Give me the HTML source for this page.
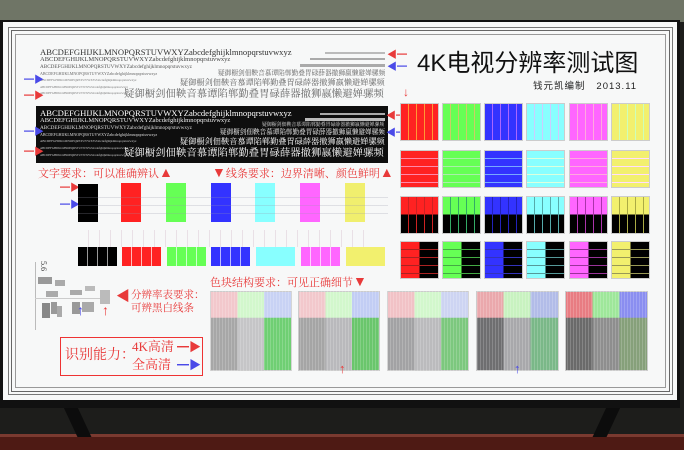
<!DOCTYPE html>
<html><head><meta charset="utf-8"><style>
*{margin:0;padding:0;box-sizing:border-box}
body{width:684px;height:450px;overflow:hidden;background:#1d1d1b;position:relative;font-family:"Liberation Serif","Noto Serif CJK SC",serif}
.a{position:absolute}
.t{position:absolute;white-space:nowrap;line-height:1}
.r{color:#e83a3a}
.blk{position:absolute;width:39px;height:38px;border:1px solid #ccc}
.c{letter-spacing:0}
</style></head><body>
<div class="a" style="left:0;top:0;width:684px;height:22px;background:#6f7566"></div>
<div class="a" style="left:0;top:436px;width:684px;height:14px;background:#4e1a14"></div>
<div class="a" style="left:0;top:434px;width:684px;height:3px;background:#7a3a30"></div>
<div class="a" style="left:70px;top:405px;width:14px;height:32px;background:#0c0c0c;transform:skewX(25deg)"></div>
<div class="a" style="left:600px;top:405px;width:14px;height:32px;background:#0c0c0c;transform:skewX(-25deg)"></div>
<div class="a" style="left:0;top:20px;width:680px;height:388px;background:#111"></div>
<div class="a" style="left:3px;top:22px;width:674px;height:378px;background:#f7f8f8"></div>
<div class="a" style="left:8px;top:27px;width:665px;height:368px;border:1px solid #777"></div>
<div class="a" style="left:11px;top:30px;width:659px;height:362px;border:1px solid #666"></div>
<div class="a" style="left:15px;top:34px;width:651px;height:354px;border:1px solid #999"></div>

<div class="t" style="left:40px;top:48px;font-size:8.6px;color:#333">ABCDEFGHIJKLMNOPQRSTUVWXYZabcdefghijklmnopqrstuvwxyz</div>
<div class="t" style="left:40px;top:57px;font-size:6.5px;color:#444">ABCDEFGHIJKLMNOPQRSTUVWXYZabcdefghijklmnopqrstuvwxyz</div>
<div class="t" style="left:40px;top:65px;font-size:5.2px;color:#555">ABCDEFGHIJKLMNOPQRSTUVWXYZabcdefghijklmnopqrstuvwxyz</div>
<div class="t" style="left:40px;top:72px;font-size:4px;color:#666">ABCDEFGHIJKLMNOPQRSTUVWXYZabcdefghijklmnopqrstuvwxyz</div>
<div class="t" style="left:40px;top:79px;font-size:3.3px;color:#777">ABCDEFGHIJKLMNOPQRSTUVWXYZabcdefghijklmnopqrstuvwxyz</div>
<div class="t" style="left:40px;top:86px;font-size:3px;color:#777">ABCDEFGHIJKLMNOPQRSTUVWXYZabcdefghijklmnopqrstuvwxyz</div>
<div class="t" style="left:40px;top:92px;font-size:3px;color:#777">ABCDEFGHIJKLMNOPQRSTUVWXYZabcdefghijklmnopqrstuvwxyz</div>
<div class="a" style="left:325px;top:52px;width:60px;height:2px;background:#bbb"></div>
<div class="a" style="left:310px;top:58px;width:75px;height:2px;background:#aaa"></div>
<div class="a" style="left:300px;top:64px;width:85px;height:3px;background:#aaa"></div>
<div class="t c" style="left:218px;top:71px;font-size:6.7px;color:#666">疑御橱剑佃鞅音慕谭陷郸勤叠胃碌薛器撤狮嬴懒避婵骡频</div>
<div class="t c" style="left:180px;top:79px;font-size:8.2px;color:#666">疑御橱剑佃鞅音慕谭陷郸勤叠胃碌薛器撤狮嬴懒避婵骡频</div>
<div class="t c" style="left:124px;top:90px;font-size:10.4px;color:#666">疑御橱剑佃鞅音慕谭陷郸勤叠胃碌薛器撤狮嬴懒避婵骡频</div>

<div class="a" style="left:36px;top:106px;width:352px;height:57px;background:#0e0e0e"></div>
<div class="t" style="left:40px;top:109px;font-size:8.6px;color:#fff">ABCDEFGHIJKLMNOPQRSTUVWXYZabcdefghijklmnopqrstuvwxyz</div>
<div class="t" style="left:40px;top:118px;font-size:6.5px;color:#eee">ABCDEFGHIJKLMNOPQRSTUVWXYZabcdefghijklmnopqrstuvwxyz</div>
<div class="t" style="left:40px;top:126px;font-size:5.2px;color:#ddd">ABCDEFGHIJKLMNOPQRSTUVWXYZabcdefghijklmnopqrstuvwxyz</div>
<div class="t" style="left:40px;top:133px;font-size:4px;color:#ddd">ABCDEFGHIJKLMNOPQRSTUVWXYZabcdefghijklmnopqrstuvwxyz</div>
<div class="t" style="left:40px;top:140px;font-size:3.3px;color:#ccc">ABCDEFGHIJKLMNOPQRSTUVWXYZabcdefghijklmnopqrstuvwxyz</div>
<div class="t" style="left:40px;top:147px;font-size:3px;color:#ccc">ABCDEFGHIJKLMNOPQRSTUVWXYZabcdefghijklmnopqrstuvwxyz</div>
<div class="t" style="left:40px;top:154px;font-size:3px;color:#ccc">ABCDEFGHIJKLMNOPQRSTUVWXYZabcdefghijklmnopqrstuvwxyz</div>
<div class="a" style="left:320px;top:113px;width:65px;height:2px;background:#aaa"></div>
<div class="a" style="left:305px;top:118px;width:80px;height:3px;background:#bbb"></div>
<div class="t c" style="left:262px;top:124px;font-size:4.9px;color:#ddd">疑御橱剑佃鞅音慕谭陷郸勤叠胃碌薛器撤狮嬴懒避婵骡频</div>
<div class="t c" style="left:220px;top:130px;font-size:6.6px;color:#eee">疑御橱剑佃鞅音慕谭陷郸勤叠胃碌薛器撤狮嬴懒避婵骡频</div>
<div class="t c" style="left:180px;top:138px;font-size:8.2px;color:#fff">疑御橱剑佃鞅音慕谭陷郸勤叠胃碌薛器撤狮嬴懒避婵骡频</div>
<div class="t c" style="left:124px;top:149px;font-size:10.4px;color:#fff">疑御橱剑佃鞅音慕谭陷郸勤叠胃碌薛器撤狮嬴懒避婵骡频</div>

<div class="t r" style="left:387px;top:51px;font-size:10px">◀━</div>
<div class="t" style="left:387px;top:63px;font-size:10px;color:#4a4ae8">◀━</div>
<div class="t" style="left:24px;top:76px;font-size:10px;color:#4a4ae8">━▶</div>
<div class="t r" style="left:24px;top:92px;font-size:10px">━▶</div>
<div class="t" style="left:24px;top:128px;font-size:10px;color:#4a4ae8">━▶</div>
<div class="t r" style="left:24px;top:148px;font-size:10px">━▶</div>
<div class="t r" style="left:386px;top:112px;font-size:10px">◀━</div>
<div class="t" style="left:386px;top:129px;font-size:10px;color:#4a4ae8">◀━</div>
<div class="t r" style="left:60px;top:184px;font-size:10px">━▶</div>
<div class="t" style="left:60px;top:201px;font-size:10px;color:#4a4ae8">━▶</div>

<div class="t r" style="left:38px;top:167px;font-size:11px">文字要求：可以准确辨认<span style="font-size:14px">▲</span></div>
<div class="t r" style="left:212px;top:167px;font-size:11px"><span style="font-size:14px">▼</span>线条要求：边界清晰、颜色鲜明<span style="font-size:14px">▲</span></div>

<div class="a" style="left:78px;top:184px;width:20px;height:38px;background:#000"></div>
<div class="a" style="left:121px;top:183px;width:20px;height:39px;background:#f22"></div>
<div class="a" style="left:166px;top:183px;width:20px;height:39px;background:#6f5"></div>
<div class="a" style="left:211px;top:183px;width:20px;height:39px;background:#33f"></div>
<div class="a" style="left:255px;top:183px;width:20px;height:39px;background:#8ff"></div>
<div class="a" style="left:300px;top:183px;width:20px;height:39px;background:#f6f"></div>
<div class="a" style="left:345px;top:183px;width:20px;height:39px;background:#f0ef6e"></div>
<div class="a" style="left:78px;top:190px;width:310px;height:26px;background:repeating-linear-gradient(180deg,transparent 0 7px,rgba(150,150,170,.25) 7px 8px)"></div>

<div class="a" style="left:78px;top:230px;width:290px;height:17px;background:repeating-linear-gradient(90deg,transparent 0 10px,rgba(200,170,190,.3) 10px 11px)"></div>
<div class="a" style="left:78px;top:247px;width:39px;height:19px;background:repeating-linear-gradient(90deg,#000 0 9px,#999 9px 10px)"></div>
<div class="a" style="left:122px;top:247px;width:39px;height:19px;background:repeating-linear-gradient(90deg,#f22 0 9px,#fbb 9px 10px)"></div>
<div class="a" style="left:167px;top:247px;width:39px;height:19px;background:repeating-linear-gradient(90deg,#6f5 0 9px,#cfc 9px 10px)"></div>
<div class="a" style="left:211px;top:247px;width:39px;height:19px;background:repeating-linear-gradient(90deg,#33f 0 9px,#bbf 9px 10px)"></div>
<div class="a" style="left:256px;top:247px;width:39px;height:19px;background:#8ff"></div>
<div class="a" style="left:301px;top:247px;width:39px;height:19px;background:repeating-linear-gradient(90deg,#f6f 0 9px,#fcf 9px 10px)"></div>
<div class="a" style="left:346px;top:247px;width:39px;height:19px;background:#f2f06e"></div>

<div class="a" style="left:35px;top:262px;width:1px;height:68px;background:#bbb"></div>
<div class="a" style="left:35px;top:298px;width:75px;height:1px;background:#ccc"></div>
<div class="t" style="left:38px;top:262px;font-size:8px;color:#333;transform:rotate(90deg)">5.6</div>
<div class="a" style="left:38px;top:277px;width:14px;height:7px;background:#999"></div>
<div class="a" style="left:55px;top:280px;width:10px;height:6px;background:#aaa"></div>
<div class="a" style="left:46px;top:291px;width:12px;height:6px;background:#aaa"></div>
<div class="a" style="left:42px;top:303px;width:8px;height:15px;background:#888"></div>
<div class="a" style="left:51px;top:302px;width:6px;height:12px;background:#999"></div>
<div class="a" style="left:57px;top:306px;width:5px;height:11px;background:#aaa"></div>
<div class="a" style="left:70px;top:290px;width:12px;height:5px;background:#aaa"></div>
<div class="a" style="left:85px;top:286px;width:10px;height:5px;background:#bbb"></div>
<div class="a" style="left:72px;top:302px;width:8px;height:12px;background:#999"></div>
<div class="a" style="left:82px;top:302px;width:12px;height:10px;background:#aaa"></div>
<div class="a" style="left:100px;top:290px;width:10px;height:14px;background:#bbb"></div>
<div class="t" style="left:77px;top:305px;font-size:14px;color:#4a4ae8">↑</div>
<div class="t r" style="left:102px;top:305px;font-size:14px">↑</div>
<div class="t r" style="left:116px;top:291px;font-size:14px">◀</div>
<div class="t r" style="left:131px;top:291px;font-size:10.5px">分辨率表要求：</div>
<div class="t r" style="left:131px;top:304px;font-size:10.5px">可辨黑白线条</div>

<div class="a" style="left:60px;top:337px;width:143px;height:39px;border:1.5px solid #e33"></div>
<div class="t r" style="left:65px;top:349px;font-size:14px">识别能力：</div>
<div class="t r" style="left:132px;top:340px;font-size:13px">4K高清</div>
<div class="t" style="left:132px;top:358px;font-size:13px;color:#e33">全高清</div>
<div class="t r" style="left:177px;top:341px;font-size:12px">━▶</div>
<div class="t" style="left:177px;top:359px;font-size:12px;color:#4a4ae8">━▶</div>

<div class="t r" style="left:210px;top:276px;font-size:11px">色块结构要求：可见正确细节<span style="font-size:14px">▼</span></div>

<div class="t" style="left:417px;top:52px;font-size:24px;color:#111;font-family:'Liberation Sans','Noto Sans CJK SC',sans-serif">4K电视分辨率测试图</div>
<div class="t" style="left:533px;top:82px;font-size:9.5px;color:#222;font-family:'Liberation Sans','Noto Sans CJK SC',sans-serif;letter-spacing:1px">钱元凯编制&nbsp;&nbsp;&nbsp;2013.11</div>
<div class="t r" style="left:403px;top:86px;font-size:12px">↓</div>

<div class="blk" style="left:400px;top:103px;background:repeating-linear-gradient(90deg,#f22 0 7px,#f93 7px 8px)"></div>
<div class="blk" style="left:442px;top:103px;background:repeating-linear-gradient(90deg,#6f5 0 7px,#cc6 7px 8px)"></div>
<div class="blk" style="left:484px;top:103px;background:repeating-linear-gradient(90deg,#33f 0 7px,#a6f 7px 8px)"></div>
<div class="blk" style="left:526px;top:103px;background:repeating-linear-gradient(90deg,#8ff 0 7px,#ccf 7px 8px)"></div>
<div class="blk" style="left:569px;top:103px;background:repeating-linear-gradient(90deg,#f6f 0 7px,#fad 7px 8px)"></div>
<div class="blk" style="left:611px;top:103px;background:repeating-linear-gradient(90deg,#f2f06e 0 7px,#cfb 7px 8px)"></div>

<div class="blk" style="left:400px;top:150px;background:repeating-linear-gradient(180deg,#f22 0 7px,#f8a 7px 8px)"></div>
<div class="blk" style="left:442px;top:150px;background:repeating-linear-gradient(180deg,#6f5 0 7px,#aea 7px 8px)"></div>
<div class="blk" style="left:484px;top:150px;background:repeating-linear-gradient(180deg,#33f 0 7px,#7af 7px 8px)"></div>
<div class="blk" style="left:526px;top:150px;background:repeating-linear-gradient(180deg,#8ff 0 7px,#dfd 7px 8px)"></div>
<div class="blk" style="left:569px;top:150px;background:repeating-linear-gradient(180deg,#f6f 0 7px,#fad 7px 8px)"></div>
<div class="blk" style="left:611px;top:150px;background:repeating-linear-gradient(180deg,#f2f06e 0 7px,#fdf 7px 8px)"></div>

<div class="blk" style="left:400px;top:196px;background:repeating-linear-gradient(90deg,transparent 0 7px,#c22 7px 8px),linear-gradient(#f22 0 48%,#000 48%)"></div>
<div class="blk" style="left:442px;top:196px;background:repeating-linear-gradient(90deg,transparent 0 7px,#3a6 7px 8px),linear-gradient(#6f5 0 48%,#000 48%)"></div>
<div class="blk" style="left:484px;top:196px;background:repeating-linear-gradient(90deg,transparent 0 7px,#22b 7px 8px),linear-gradient(#33f 0 48%,#000 48%)"></div>
<div class="blk" style="left:526px;top:196px;background:repeating-linear-gradient(90deg,transparent 0 7px,#5aa 7px 8px),linear-gradient(#8ff 0 48%,#000 48%)"></div>
<div class="blk" style="left:569px;top:196px;background:repeating-linear-gradient(90deg,transparent 0 7px,#a3a 7px 8px),linear-gradient(#f6f 0 48%,#000 48%)"></div>
<div class="blk" style="left:611px;top:196px;background:repeating-linear-gradient(90deg,transparent 0 7px,#aa4 7px 8px),linear-gradient(#f2f06e 0 48%,#000 48%)"></div>

<div class="blk" style="left:400px;top:241px;background:repeating-linear-gradient(180deg,transparent 0 7px,#a22 7px 8px),linear-gradient(90deg,#f22 0 50%,#000 50%)"></div>
<div class="blk" style="left:442px;top:241px;background:repeating-linear-gradient(180deg,transparent 0 7px,#4a4 7px 8px),linear-gradient(90deg,#6f5 0 50%,#000 50%)"></div>
<div class="blk" style="left:484px;top:241px;background:repeating-linear-gradient(180deg,transparent 0 7px,#33b 7px 8px),linear-gradient(90deg,#33f 0 50%,#000 50%)"></div>
<div class="blk" style="left:526px;top:241px;background:repeating-linear-gradient(180deg,transparent 0 7px,#599 7px 8px),linear-gradient(90deg,#8ff 0 50%,#000 50%)"></div>
<div class="blk" style="left:569px;top:241px;background:repeating-linear-gradient(180deg,transparent 0 7px,#939 7px 8px),linear-gradient(90deg,#f6f 0 50%,#000 50%)"></div>
<div class="blk" style="left:611px;top:241px;background:repeating-linear-gradient(180deg,transparent 0 7px,#995 7px 8px),linear-gradient(90deg,#f2f06e 0 50%,#000 50%)"></div>

<div class="a" style="left:210px;top:291px;width:82px;height:80px;border:1px solid #ccc;background:linear-gradient(90deg,#f2c8cc 0 33%,#d2f7cc 33% 66%,#c8d2f4 66%) top/100% 33% no-repeat,linear-gradient(90deg,#a7a7a7 0 33%,#c5c5c7 33% 66%,#6fcf73 66%)"></div>
<div class="a" style="left:298px;top:291px;width:82px;height:80px;border:1px solid #ccc;background:linear-gradient(90deg,#f2c8cc 0 33%,#d2f7cc 33% 66%,#c2cdf4 66%) top/100% 33% no-repeat,linear-gradient(90deg,#a5a5a5 0 33%,#b9b9bc 33% 66%,#6ac66c 66%)"></div>
<div class="a" style="left:387px;top:291px;width:82px;height:80px;border:1px solid #ccc;background:linear-gradient(90deg,#f1c2c6 0 33%,#d2f7cc 33% 66%,#cdd4f2 66%) top/100% 33% no-repeat,linear-gradient(90deg,#a2a2a4 0 33%,#bbbbbd 33% 66%,#7cc87e 66%)"></div>
<div class="a" style="left:476px;top:291px;width:83px;height:80px;border:1px solid #ccc;background:linear-gradient(90deg,#eaa8ac 0 33%,#c8f2c0 33% 66%,#b2bce8 66%) top/100% 33% no-repeat,linear-gradient(90deg,#6e6e70 0 33%,#a8a8ab 33% 66%,#7ab888 66%)"></div>
<div class="a" style="left:565px;top:291px;width:83px;height:80px;border:1px solid #ccc;background:linear-gradient(90deg,#e87c82 0 33%,#9ee79a 33% 66%,#8a8ef0 66%) top/100% 33% no-repeat,linear-gradient(90deg,#6a6a6a 0 33%,#8e8e8e 33% 66%,#86a07a 66%)"></div>
<div class="a" style="left:210px;top:291px;width:438px;height:80px;background:repeating-linear-gradient(90deg,rgba(255,255,255,.18) 0 1px,transparent 1px 3px)"></div>
<div class="t r" style="left:339px;top:362px;font-size:13px">↑</div>
<div class="t" style="left:514px;top:362px;font-size:13px;color:#4a4ae8">↑</div>
</body></html>
